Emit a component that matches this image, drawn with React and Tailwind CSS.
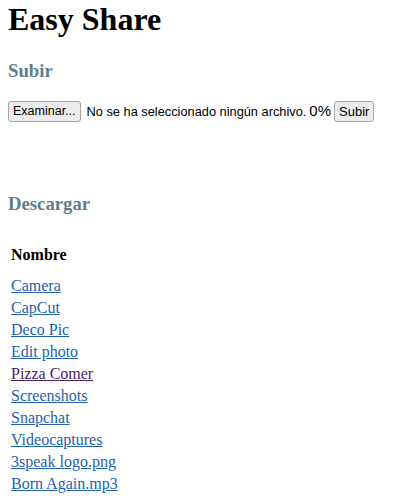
import React from 'react';

const files = [
    { name: 'Camera' },
    { name: 'CapCut' },
    { name: 'Deco Pic' },
    { name: 'Edit photo' },
    { name: 'Pizza Comer', visited: true },
    { name: 'Screenshots' },
    { name: 'Snapchat' },
    { name: 'Videocaptures' },
    { name: '3speak logo.png' },
    { name: 'Born Again.mp3' }
];

const Button = ({ children, className = '' }) => (
    <button className={`h-[21px] bg-[#ececec] border border-[#a6a6a6] rounded-[3px] text-[12.5px] leading-none text-black font-['Liberation_Sans',Arial,sans-serif] whitespace-nowrap ${className}`}>
        {children}
    </button>
);

const App = () => {
    return (
        <div className="w-[408px] h-[498px] bg-white px-2 overflow-hidden font-['Liberation_Serif','Times_New_Roman',serif] text-black">
            <h1 className="text-[32px] font-bold leading-[36px] pt-[1px]">Easy Share</h1>

            <h3 className="mt-[23px] text-[18.72px] font-bold leading-[22px] text-[#5f7d88]">Subir</h3>

            <div className="mt-[19px] flex items-center h-[21px] whitespace-nowrap font-['Liberation_Sans',Arial,sans-serif]">
                <Button className="px-[4px]">Examinar...</Button>
                <span className="ml-[6px] text-[12.8px]">No se ha seleccionado ningún archivo.</span>
                <span className="ml-[3px] text-[15px]">0%</span>
                <Button className="ml-[3px] px-[4px] text-[13px]">Subir</Button>
            </div>

            <h3 className="mt-[71px] text-[18.72px] font-bold leading-[22px] text-[#5f7d88]">Descargar</h3>

            <table className="mt-[28px] border-separate border-spacing-[2px] text-[16px]">
                <thead>
                    <tr>
                        <th className="p-[1px] pb-[10px] text-left font-bold leading-[18px]">Nombre</th>
                    </tr>
                </thead>
                <tbody>
                    {files.map((file, index) => (
                        <tr key={index}>
                            <td className="p-[1px] leading-[18px]">
                                <a
                                    href="#"
                                    className={`underline ${file.visited ? 'text-[#4a1d6e]' : 'text-[#1e5faf]'}`}
                                >
                                    {file.name}
                                </a>
                            </td>
                        </tr>
                    ))}
                </tbody>
            </table>
        </div>
    );
};

export default App;
